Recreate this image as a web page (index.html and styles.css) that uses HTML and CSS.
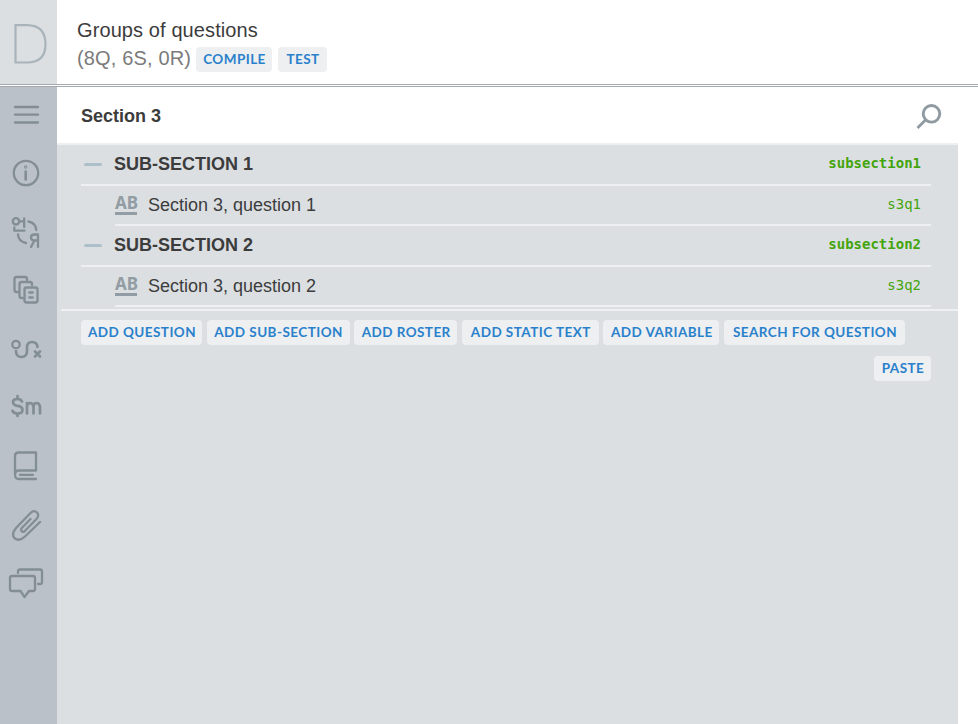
FILE: index.html
```html
<!DOCTYPE html>
<html lang="en">
<head>
<meta charset="utf-8">
<title>Groups of questions</title>
<link rel="stylesheet" href="styles.css">
</head>
<body>
<header class="header">
  <div class="logo"><svg width="57" height="84" viewBox="0 0 57 84"><path d="M15.500 25.200V62.500H27Q45.500 62.500 45.500 44T27 25.200Z" fill="none" stroke="#a9b3ba" stroke-width="2.200"/></svg></div>
  <div class="heading">
    <h1>Groups of questions</h1>
    <div class="summary"><span class="counts">(8Q, 6S, 0R)</span><button class="btn compile">COMPILE</button><button class="btn test">TEST</button></div>
  </div>
</header>
<div class="body">
  <nav class="sidebar">
    <svg width="57" height="637" viewBox="0 87 57 637" fill="none" stroke="#828d95" stroke-width="2.300" stroke-linecap="round" stroke-linejoin="round">
      <path d="M15 107H38M15 114.700H38M15 122.500H38"/>
      <circle cx="26" cy="173" r="12.200"/><path d="M25.700 171.500V179.500" stroke-width="2.600"/><circle cx="25.700" cy="167" r=".5"/>
      <circle cx="16" cy="221.300" r="3.200"/><path d="M20 221.300H24M24.200 218.500V227M14.300 227.500V230.700H24.500M28.500 221.500Q36 223 36.300 230M18 234.500Q18.500 241.500 26 243M38 247V234.500H34.500Q31 234.500 31 237.500T34.500 240.500H38M34.500 240.500L31 247"/>
      <path d="M18 292H16.500Q14.500 292 14.500 290V279Q14.500 277 16.500 277H25Q27 277 27 279V280M23 298H21.500Q19.500 298 19.500 296V284Q19.500 282 21.500 282H30Q32 282 32 284V285"/><rect x="24.500" y="287.500" width="13" height="15" rx="2"/><path d="M29.300 292.500H32.700M29.300 297.500H32.700"/>
      <circle cx="16" cy="344.500" r="3.700"/><path d="M16 351Q16 357 21.500 357T27 351V347.500Q27 342 32 342T37.500 347M35 351.500L40 356.500M40 351.500L35 356.500" stroke-width="2.600"/>
      <path d="M22 401.500Q21 399 17.500 399Q13 399 13 402T17.500 405.900Q22.500 406.500 22.500 410T17.500 413.500Q14 413.500 12.500 411M17.500 396V399M17.500 413.500V416M27 413.500V403M27 407Q27 403 30 403T33.500 407V413.500M33.500 407Q33.500 403 36.500 403T40 407V413.500" stroke-width="2.700"/>
      <path d="M36 470.500H19Q15 470.500 15 474.800T19 479H36M15 475V456Q15 452.500 18.500 452.500H36V470.500M20 474.800H33"/>
      <path d="M30.500 519L21.800 528Q20.500 529.800 21.700 531.200T25 530.800L36.500 519Q39.700 515.500 37 512.500Q34 509.500 30.500 513L16.500 527.500Q10.800 534 14.500 538.200Q19 542 25 536.500L40 522"/>
      <path d="M18 573V571.500Q18 569.500 20 569.500H40Q42 569.500 42 571.500V582Q42 584 40 584H38M12 576H33Q35 576 35 578V589Q35 591 33 591H29L24.500 597L20.500 591H12Q10 591 10 589V578Q10 576 12 576Z"/>
    </svg>
  </nav>
  <main class="main">
    <div class="section"><h2>Section 3</h2><svg class="search" width="26" height="26" viewBox="0 0 26 26" fill="none" stroke="#909aa1" stroke-width="2.900"><circle cx="15.500" cy="9.800" r="8.300"/><path d="M10 15.500L1.500 24"/></svg></div>
    <div class="tree">
      <div class="row group"><i class="dash"></i><b>SUB-SECTION 1</b><code>subsection1</code></div>
      <div class="row question"><span class="kind">AB</span><span>Section 3, question 1</span><code>s3q1</code></div>
      <div class="row group"><i class="dash"></i><b>SUB-SECTION 2</b><code>subsection2</code></div>
      <div class="row question"><span class="kind">AB</span><span>Section 3, question 2</span><code>s3q2</code></div>
    </div>
    <div class="actions">
      <button class="btn add-question">ADD QUESTION</button><button class="btn add-sub">ADD SUB-SECTION</button><button class="btn add-roster">ADD ROSTER</button><button class="btn add-text">ADD STATIC TEXT</button><button class="btn add-variable">ADD VARIABLE</button><button class="btn find">SEARCH FOR QUESTION</button><button class="btn paste">PASTE</button>
    </div>
  </main>
</div>
</body>
</html>
```
FILE: styles.css
```css
* { box-sizing: border-box; }
body { margin: 0; height: 724px; overflow: hidden; background: #fff; color: #3c3c3c; font-family: "Liberation Sans", Arial, sans-serif; }
svg { display: block; }
h1, h2 { margin: 0; }
.header { display: flex; height: 87px; border-bottom: 3px double #a3a9ad; }
.logo { width: 57px; background: #dbdfe2; }
.heading { padding: 16px 0 0 20px; }
h1 { font-size: 20px; font-weight: 400; line-height: 28px; letter-spacing: .1px; }
.summary { display: flex; align-items: flex-start; }
.counts { width: 119px; font-size: 20px; line-height: 28px; letter-spacing: .15px; color: #7b7b7b; white-space: nowrap; }
.btn { display: block; height: 25px; margin: 0; padding: 0 0 1px 1px; border: 0; border-radius: 4px; background: #edeff1; color: #2a81cb; font: 700 13.5px/24px Lato, sans-serif; letter-spacing: .45px; white-space: nowrap; text-align: center; }
.compile { width: 76px; margin-top: 3px; }
.test { width: 49px; margin: 3px 0 0 6px; }
.body { display: flex; height: 637px; }
.sidebar { width: 57px; background: #bac1c8; }
.main { width: 901px; background: #dbdfe2; }
.section { display: flex; justify-content: space-between; height: 58px; padding: 17px 16px 0 24px; border-bottom: 2px solid #edeff1; background: #fff; }
h2 { font-size: 18px; line-height: 24px; }
.tree { padding: 0 27px 2px 24px; }
.row { display: flex; align-items: center; height: 41px; padding: 0 10px 1px 0; border-bottom: 2px solid #edeff1; font-size: 18px; }
.question { height: 40px; margin-left: 34px; padding-bottom: 0; }
.dash { width: 18px; height: 3px; margin: 1px 12px 0 3px; border-radius: 2px; background: #adc0ca; }
.kind { width: 22px; height: 19px; margin: 1px 11px 0 0; border-bottom: 3px solid #929ca4; color: #929ca4; font: 700 17px/14px "Noto Sans", sans-serif; }
code { margin: 0 0 2px auto; color: #43a50b; font: 14px "DejaVu Sans Mono", monospace; }
.group code { font-weight: 700; }
.actions { display: flex; flex-wrap: wrap; gap: 11px 4.6px; margin-left: 4px; padding: 9px 27px 0 20px; border-top: 2px solid #edeff1; }
.add-question { width: 121px; }
.add-sub { width: 143px; }
.add-roster { width: 103px; }
.add-text { width: 137px; }
.add-variable { width: 116px; }
.find { width: 181px; }
.paste { width: 57px; margin-left: auto; }
```
